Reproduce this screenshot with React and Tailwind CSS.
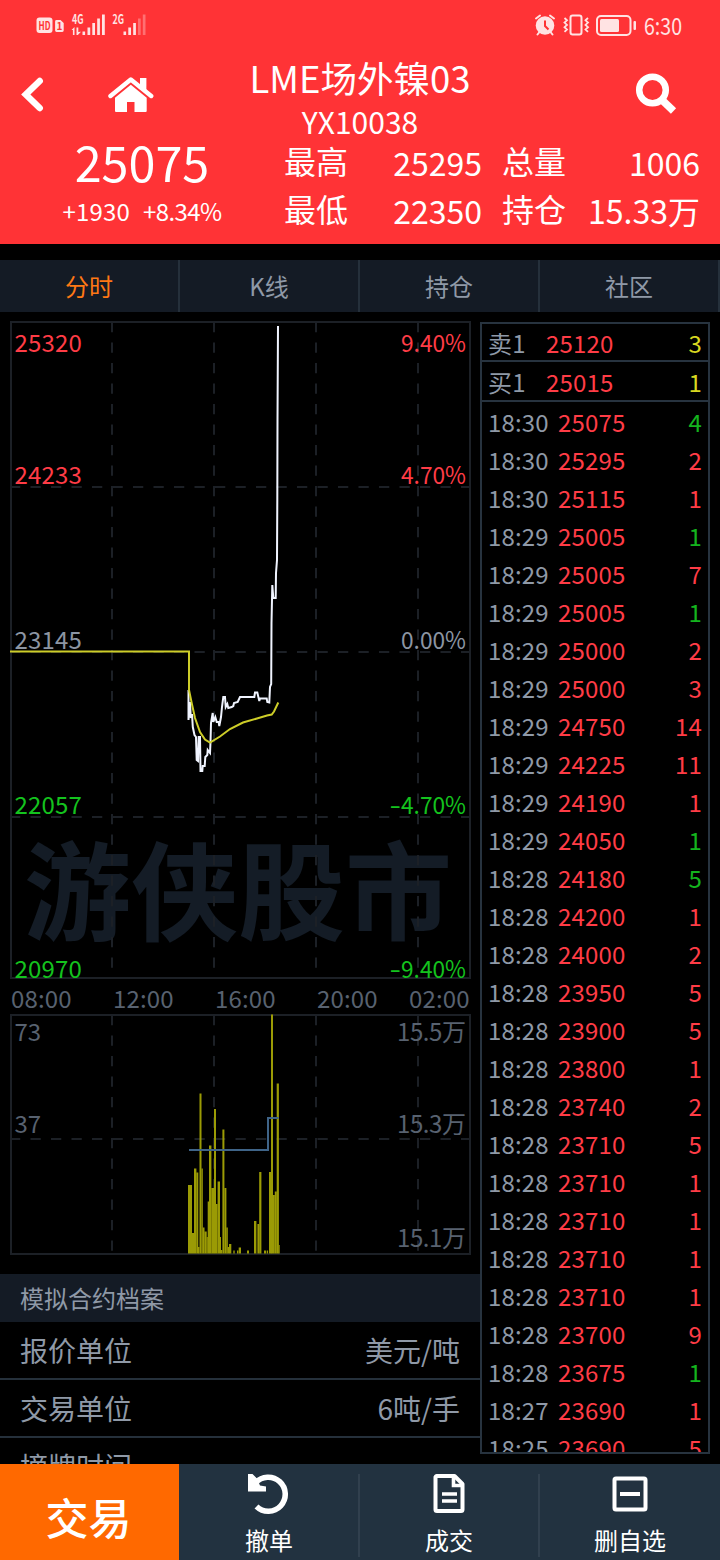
const TABS = ['分时', 'K线', '持仓', '社区']

const QUOTES = [
  { label: '卖1', price: 25120, volume: 3 },
  { label: '买1', price: 25015, volume: 1 },
]

// [time, price, volume, direction]
const TRADES = [
  ['18:30', 25075, 4, 'down'],
  ['18:30', 25295, 2, 'up'],
  ['18:30', 25115, 1, 'up'],
  ['18:29', 25005, 1, 'down'],
  ['18:29', 25005, 7, 'up'],
  ['18:29', 25005, 1, 'down'],
  ['18:29', 25000, 2, 'up'],
  ['18:29', 25000, 3, 'up'],
  ['18:29', 24750, 14, 'up'],
  ['18:29', 24225, 11, 'up'],
  ['18:29', 24190, 1, 'up'],
  ['18:29', 24050, 1, 'down'],
  ['18:28', 24180, 5, 'down'],
  ['18:28', 24200, 1, 'up'],
  ['18:28', 24000, 2, 'up'],
  ['18:28', 23950, 5, 'up'],
  ['18:28', 23900, 5, 'up'],
  ['18:28', 23800, 1, 'up'],
  ['18:28', 23740, 2, 'up'],
  ['18:28', 23710, 5, 'up'],
  ['18:28', 23710, 1, 'up'],
  ['18:28', 23710, 1, 'up'],
  ['18:28', 23710, 1, 'up'],
  ['18:28', 23710, 1, 'up'],
  ['18:28', 23700, 9, 'up'],
  ['18:28', 23675, 1, 'down'],
  ['18:27', 23690, 1, 'up'],
  ['18:25', 23690, 5, 'up'],
]

const PROFILE = [
  ['报价单位', '美元/吨'],
  ['交易单位', '6吨/手'],
  ['摘牌时间', ''],
]

const PRICE_LABELS = [
  { y: 351.5, left: '25320', right: '9.40%', color: '#ff3c46' },
  { y: 484, left: '24233', right: '4.70%', color: '#ff3c46' },
  { y: 649, left: '23145', right: '0.00%', color: '#8c95a3' },
  { y: 814, left: '22057', right: '-4.70%', color: '#14c31e' },
  { y: 978, left: '20970', right: '-9.40%', color: '#14c31e' },
]

const TIME_LABELS = [
  [11, '08:00'],
  [113, '12:00'],
  [215, '16:00'],
  [317, '20:00'],
  [409, '02:00'],
]

const VOLUME_LABELS = [
  { y: 1040.5, left: '73', right: '15.5万' },
  { y: 1132.5, left: '37', right: '15.3万' },
  { y: 1246.5, left: '', right: '15.1万' },
]

const PRICE_LINE =
  '188.5,690 188.5,720 190,702 190.8,718 192,714 192.8,727 194.5,735 196,737 196.7,760 198,761 198.7,737 200,737 200.5,771 202.3,771 202.7,766 204.7,766 205.3,757 207.3,755 207.7,750 210,753 210.5,742 211,723 212.7,713 213.3,722 215.3,717 216.7,722 218.7,722 219.3,726 221,717 222,707 223.3,697 225,697 225.7,707 227.3,704 228.3,708 231.7,707 233.3,706 234,703 237.7,702 240,697 254.3,697 255,692.5 257.3,692.5 259.3,701 260,698.5 266.7,698.5 267.3,702 269.3,702.5 270,687 271.2,684 271.5,623 272.3,585 273.3,598 275.7,598 276,573 277,560 277.3,500 277.5,420 278,326'

const AVERAGE_LINE =
  '10,651.5 189,651.5 189,690 191.7,703 195,718 200,732 205,739.5 210,742.5 220,736.5 230,729 243,722.5 257,718.5 267,715.5 271.7,714.5 274,711.5 278.3,702.5'

// [x, width, top]
const VOLUME_BARS = [
  [188, 4, 1185], [192, 2, 1233], [194, 2.4, 1168.5], [196.3, 2, 1172.5], [198, 1.5, 1247],
  [199.5, 2, 1093.5], [201.5, 1.3, 1168.5], [202.7, 1.8, 1227.5], [204.4, 2.3, 1231.5], [206.6, 1.2, 1237],
  [207.7, 1.4, 1201.5], [209, 2.4, 1145.5], [211.3, 2.8, 1188], [214, 2, 1109], [216, 1.6, 1204],
  [217.6, 2.4, 1181.5], [220, 1, 1237], [221, 1.3, 1250], [222.4, 2, 1129.5], [224.4, 2, 1188],
  [226.3, 1.5, 1227.5], [227.6, 1.6, 1247], [229, 2.3, 1244], [233.3, 1.4, 1250.5], [237, 1.4, 1250.5],
  [238.7, 2.3, 1247.5], [247, 2, 1250.5], [254, 2.4, 1221], [257.4, 1.8, 1224], [259.2, 2.2, 1172],
  [264, 2, 1250.5], [266.7, 1.4, 1250.5], [269, 2.3, 1172], [271, 2, 1014.5], [273, 1.8, 1195],
  [274.8, 2, 1191.5], [276.7, 2.2, 1083.5], [278.7, 1, 1245],
]

function StatusBar() {
  return (
    <svg className="block h-[50px] w-full" viewBox="0 0 720 50" fill="#ffe3e3">
      <rect x="36.5" y="17.5" width="16" height="15.5" rx="3" />
      <text x="38.5" y="29.5" fontSize="11" fontWeight="700" fill="#f33" textLength="12" lengthAdjust="spacingAndGlyphs">HD</text>
      <path d="M56.5 20h4l3.2 3v7.6a1.4 1.4 0 0 1-1.4 1.4h-5.8a1.4 1.4 0 0 1-1.4-1.4v-9.2a1.4 1.4 0 0 1 1.4-1.4z" />
      <text x="56.5" y="30" fontSize="10" fontWeight="700" fill="#f33">1</text>
      <text x="72" y="24" fontSize="13" fontWeight="700" textLength="11.5" lengthAdjust="spacingAndGlyphs">4G</text>
      <path d="M71.5 30l3-3v8h-1.600v-5zM76.500 27.500h1.800v4.500l2.700-.3-3.200 3.300h-1.300z" />
      <path d="M82.5 31.5h2.6v3.5h-2.6zM87.5 27.5h2.7V35h-2.7zM92.3 23h2.7v12h-2.7zM97.2 18.5h2.7V35h-2.7zM102 14.5h2.8V35H102z" />
      <text x="112.5" y="24" fontSize="13" fontWeight="700" textLength="11.5" lengthAdjust="spacingAndGlyphs">2G</text>
      <path d="M123.5 31.5h2.6v3.5h-2.6zM128.3 27.5h2.7V35h-2.7zM133.2 23h2.7v12h-2.7z" />
      <path opacity=".35" d="M138 18.5h2.7V35H138zM142.8 14.5h2.7V35h-2.7z" />

      {/* alarm */}
      <circle cx="545" cy="25.5" r="9.3" />
      <path d="M536 18.5l4-3M554 18.5l-4-3M539.5 32l-2 2.5M550.5 32l2 2.5" fill="none" stroke="#ffe3e3" strokeWidth="2" strokeLinecap="round" />
      <path d="M545 20.5v5.5l3.5 3.5" fill="none" stroke="#f33" strokeWidth="2" />
      {/* vibrate */}
      <g fill="none" stroke="#ffe3e3" strokeWidth="2">
        <rect x="570.5" y="15.5" width="11" height="19" rx="2.2" />
        <path d="M564.5 18l2.5 2.3-2.5 2.3 2.5 2.3-2.5 2.3 2.5 2.3-2.5 2.3M588 18l-2.5 2.3 2.5 2.3-2.5 2.3 2.5 2.3-2.5 2.3 2.5 2.3" strokeWidth="1.8" />
        <rect x="597" y="16" width="33.5" height="19" rx="4" />
      </g>
      <rect x="600" y="19" width="19" height="13" rx="1.5" />
      <rect x="633.5" y="21" width="2.5" height="9" rx="1" />
      <text x="644" y="35" fontSize="24" textLength="38" lengthAdjust="spacingAndGlyphs">6:30</text>
    </svg>
  )
}

function Stats() {
  return (
    <div className="-mt-1 grid w-[416px] grid-cols-[64px_134px_20px_64px_134px] grid-rows-[48px_48px]">
      <span>最高</span>
      <span className="pt-0.5 text-right">25295</span>
      <span />
      <span>总量</span>
      <span className="pt-0.5 text-right">1006</span>
      <span>最低</span>
      <span className="pt-0.5 text-right">22350</span>
      <span />
      <span>持仓</span>
      <span className="pt-0.5 text-right">15.33万</span>
    </div>
  )
}

function Header() {
  return (
    <header className="h-[244px] shrink-0 bg-[#ff3336] text-white">
      <StatusBar />
      <div className="grid h-[90px] grid-cols-[200px_1fr_200px]">
        <div className="flex items-center pb-1 pl-5">
          <svg className="h-9 w-6" viewBox="0 0 24 36" fill="none" stroke="white" strokeWidth="6.5" strokeLinecap="round">
            <path d="M19.7 5L5.8 18.500 19.700 32" />
          </svg>
          <svg className="ml-16 h-9 w-[46px]" viewBox="0 0 46 36" fill="white">
            <path d="M32 2h6.400v14L32 10z" />
            <path d="M2.500 20L22.800 3.500 43.200 20" fill="none" stroke="white" strokeWidth="4.400" strokeLinecap="round" strokeLinejoin="round" />
            <path d="M22.800 8.800L38.700 21.700V35a1 1 0 0 1-1 1H26.500V26h-7.500v10H8a1 1 0 0 1-1-1V21.700z" />
          </svg>
        </div>
        <div className="flex flex-col items-center whitespace-nowrap pt-[6px]">
          <div className="text-[36.5px] leading-[44px]">LME场外镍03</div>
          <div className="text-[30px] leading-[42px]">YX10038</div>
        </div>
        <div className="flex items-center justify-end pr-[43px] pb-1">
          <svg className="h-[42px] w-[42px]" viewBox="0 0 42 42" fill="none" stroke="white">
            <circle cx="17.500" cy="17" r="13.300" strokeWidth="6.500" />
            <path d="M26.500 26.500L38.500 38" strokeWidth="7.500" />
          </svg>
        </div>
      </div>
      <div className="flex h-[104px] text-[32px] leading-[48px]">
        <div className="flex w-[284px] flex-col items-center">
          <div className="text-[48.5px] leading-[43px]">25075</div>
          <div className="flex gap-[13px] pt-[6px] text-[24px] leading-[44px]">
            <span className="tracking-[0.2px]">+1930</span>
            <span className="tracking-[-0.6px]">+8.34%</span>
          </div>
        </div>
        <Stats />
      </div>
    </header>
  )
}

function Chart() {
  return (
    <svg className="block h-[962px] w-[480px]" viewBox="0 312 480 962" fontSize="24">
      <text x="24" y="932" fontSize="107" fontWeight="700" fill="#141c26">游侠股市</text>

      <g stroke="#1c2026" strokeWidth="2" fill="none">
        <rect x="11" y="322" width="459" height="656" />
        <rect x="11" y="1015" width="459" height="239" />
        <g strokeDasharray="10.25 10.25">
          {[112, 214, 316, 418].map(x => (
            <path key={x} d={`M${x} 322V978M${x} 1015V1254`} />
          ))}
          {[487, 652, 817, 1139].map(y => (
            <path key={y} d={`M10 ${y}H470`} />
          ))}
        </g>
      </g>

      {PRICE_LABELS.map(l => (
        <g key={l.y} fill={l.color}>
          <text x="14.5" y={l.y} letterSpacing=".2">{l.left}</text>
          <text x="401" y={l.y} textAnchor="start" textLength="65" lengthAdjust="spacingAndGlyphs">{l.right.replace('-', '')}</text>
          {l.right.startsWith('-') && <text x="389.5" y={l.y} textLength="11.5" lengthAdjust="spacingAndGlyphs">-</text>}
        </g>
      ))}
      <g fill="#586270">
        {TIME_LABELS.map(([x, label]) => (
          <text key={label} x={x} y="1007.5" letterSpacing=".15">{label}</text>
        ))}
        {VOLUME_LABELS.map(l => (
          <g key={l.y}>
            <text x="14.5" y={l.y}>{l.left}</text>
            <text x="397" y={l.y} textLength="69">{l.right}</text>
          </g>
        ))}
      </g>

      <polyline points={PRICE_LINE} fill="none" stroke="#f0f4ff" strokeWidth="2" />
      <polyline points={AVERAGE_LINE} fill="none" stroke="#cdcd28" strokeWidth="2" />

      {VOLUME_BARS.map(([x, w, top]) => (
        <rect key={x} x={x} y={top} width={w} height={1253.5 - top} fill="#9b9b05" />
      ))}
      <path d="M189 1150H268V1118H278.5" fill="none" stroke="#3f6488" strokeWidth="2" />
    </svg>
  )
}

function Trades() {
  return (
    <aside className="mt-[10px] h-[1132px] w-[230px] shrink-0 overflow-hidden border-2 border-[#27333f] text-[24px] leading-[40px] tracking-[0.15px] text-[#8f99a7]">
      {QUOTES.map((q, i) => (
        <div key={q.label} className={`flex border-b-2 border-[#27333f] px-1.5 ${i === 0 ? 'h-[38px] leading-[37px]' : 'h-[40px]'}`}>
          <span className="w-[58px]">{q.label}</span>
          <span className="text-[#ff3c46]">{q.price}</span>
          <span className="ml-auto text-[#d8d820]">{q.volume}</span>
        </div>
      ))}
      {TRADES.map(([time, price, volume, dir], i) => (
        <div key={i} className="flex h-[38px] px-1.5">
          <span className="w-[70px]">{time}</span>
          <span className="text-[#ff3c46]">{price}</span>
          <span className={`ml-auto ${dir === 'up' ? 'text-[#ff3c46]' : 'text-[#14b41e]'}`}>{volume}</span>
        </div>
      ))}
    </aside>
  )
}

function NavButton({ label, divider, children }) {
  return (
    <button className={`my-2.5 flex flex-col items-center ${divider ? 'border-r-2 border-[#31404e]' : ''}`}>
      <svg className="-mt-0.5 h-[44px] w-11 shrink-0" viewBox="0 0 44 44" fill="none" stroke="white" strokeWidth="4">
        {children}
      </svg>
      <span className="pt-[7px]">{label}</span>
    </button>
  )
}

function BottomBar() {
  return (
    <nav className="grid h-24 shrink-0 grid-cols-4 bg-[#223240] text-[24px] leading-[34px] text-white">
      <button className="mr-px bg-[#ff6900] pr-0.5 text-[43px] font-medium">交易</button>
      <NavButton label="撤单" divider>
        <path d="M8.500 11A17 17 0 1 1 9.500 34.500" strokeWidth="5.600" />
        <path d="M1 2h4.500L10 6.500 13 13.500l6 1V19.500H1z" fill="white" stroke="none" />
      </NavButton>
      <NavButton label="成交" divider>
        <path d="M9.500 4H27.500L35.500 12V37.500a1.500 1.500 0 0 1-1.500 1.500H10a1.500 1.500 0 0 1-1.500-1.500V5z" strokeLinejoin="round" />
        <path d="M26.500 4v9.500h9.500M15 22h15M15 29h15" strokeWidth="3.600" />
      </NavButton>
      <NavButton label="删自选">
        <rect x="6.500" y="6.500" width="31" height="31" rx="1.500" />
        <path d="M12 22h20" />
      </NavButton>
    </nav>
  )
}

export default function App() {
  return (
    <div className="flex h-[1560px] w-[720px] flex-col overflow-hidden bg-black font-['Noto_Sans_CJK_SC',sans-serif]">
      <Header />
      <div className="mt-4 grid h-[52px] shrink-0 grid-cols-4 bg-[#141b25] text-center text-[24px] leading-[52px] text-[#8f99a7]">
        {TABS.map((tab, i) => (
          <div key={tab} className={`border-r-2 border-[#25303b] ${i === 0 ? 'text-[#ff7814]' : ''}`}>{tab}</div>
        ))}
      </div>
      <main className="flex h-[1152px] shrink-0 overflow-hidden">
        <div className="w-[480px] shrink-0">
          <Chart />
          <h2 className="h-12 bg-[#141b25] pl-5 text-[24px] leading-[48px] text-[#8f99a7]">模拟合约档案</h2>
          {PROFILE.map(([label, value]) => (
            <div key={label} className="flex h-[58px] justify-between border-b-2 border-[#25303b] px-5 text-[28px] leading-[57px] text-[#8f99a7]">
              <span>{label}</span>
              <span>{value}</span>
            </div>
          ))}
        </div>
        <Trades />
      </main>
      <BottomBar />
    </div>
  )
}
